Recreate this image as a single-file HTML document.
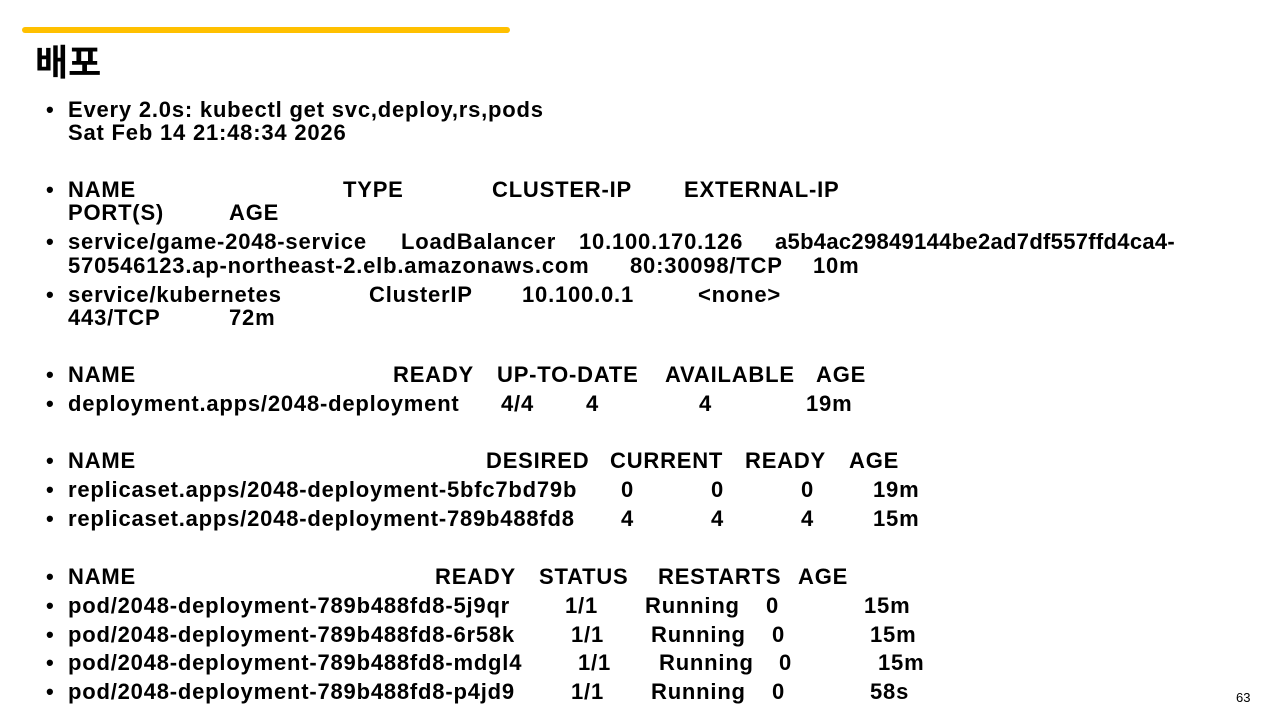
<!DOCTYPE html>
<html><head><meta charset="utf-8"><style>
body{margin:0;width:1280px;height:720px;background:#fff;position:relative;overflow:hidden;font-family:"Liberation Sans","Noto Sans CJK KR",sans-serif;color:#000}
.bar{position:absolute;left:22px;top:27px;width:488px;height:6px;background:#FFC000;border-radius:3px}
h1{position:absolute;left:35px;top:41px;margin:0;font-size:36px;font-weight:bold;line-height:44px}
.t{position:absolute;font-size:22px;font-weight:bold;line-height:24px;white-space:nowrap;letter-spacing:0.8px;margin-top:0px}
.pg{position:absolute;left:1236px;top:690px;font-size:13px}
</style></head><body>
<div class="bar"></div>
<h1>배포</h1>
<div class="t" style="left:46px;top:98px">•</div>
<div class="t" style="left:68px;top:98px">Every 2.0s: kubectl get svc,deploy,rs,pods</div>
<div class="t" style="left:68px;top:121px">Sat Feb 14 21:48:34 2026</div>

<div class="t" style="left:46px;top:178px">•</div>
<div class="t" style="left:68px;top:178px">NAME</div><div class="t" style="left:343px;top:178px">TYPE</div><div class="t" style="left:492px;top:178px">CLUSTER-IP</div><div class="t" style="left:684px;top:178px">EXTERNAL-IP</div>
<div class="t" style="left:68px;top:201px">PORT(S)</div><div class="t" style="left:229px;top:201px">AGE</div>

<div class="t" style="left:46px;top:230px">•</div>
<div class="t" style="left:68px;top:230px">service/game-2048-service</div><div class="t" style="left:401px;top:230px">LoadBalancer</div><div class="t" style="left:579px;top:230px">10.100.170.126</div><div class="t" style="left:775px;top:230px;letter-spacing:0.3px">a5b4ac29849144be2ad7df557ffd4ca4-</div>
<div class="t" style="left:68px;top:254px">570546123.ap-northeast-2.elb.amazonaws.com</div><div class="t" style="left:630px;top:254px">80:30098/TCP</div><div class="t" style="left:813px;top:254px">10m</div>

<div class="t" style="left:46px;top:283px">•</div>
<div class="t" style="left:68px;top:283px">service/kubernetes</div><div class="t" style="left:369px;top:283px">ClusterIP</div><div class="t" style="left:522px;top:283px">10.100.0.1</div><div class="t" style="left:698px;top:283px">&lt;none&gt;</div>
<div class="t" style="left:68px;top:306px">443/TCP</div><div class="t" style="left:229px;top:306px">72m</div>

<div class="t" style="left:46px;top:363px">•</div>
<div class="t" style="left:68px;top:363px">NAME</div><div class="t" style="left:393px;top:363px">READY</div><div class="t" style="left:497px;top:363px">UP-TO-DATE</div><div class="t" style="left:665px;top:363px">AVAILABLE</div><div class="t" style="left:816px;top:363px">AGE</div>
<div class="t" style="left:46px;top:392px">•</div>
<div class="t" style="left:68px;top:392px">deployment.apps/2048-deployment</div><div class="t" style="left:501px;top:392px">4/4</div><div class="t" style="left:586px;top:392px">4</div><div class="t" style="left:699px;top:392px">4</div><div class="t" style="left:806px;top:392px">19m</div>

<div class="t" style="left:46px;top:449px">•</div>
<div class="t" style="left:68px;top:449px">NAME</div><div class="t" style="left:486px;top:449px">DESIRED</div><div class="t" style="left:610px;top:449px">CURRENT</div><div class="t" style="left:745px;top:449px">READY</div><div class="t" style="left:849px;top:449px">AGE</div>
<div class="t" style="left:46px;top:478px">•</div>
<div class="t" style="left:68px;top:478px">replicaset.apps/2048-deployment-5bfc7bd79b</div><div class="t" style="left:621px;top:478px">0</div><div class="t" style="left:711px;top:478px">0</div><div class="t" style="left:801px;top:478px">0</div><div class="t" style="left:873px;top:478px">19m</div>
<div class="t" style="left:46px;top:507px">•</div>
<div class="t" style="left:68px;top:507px">replicaset.apps/2048-deployment-789b488fd8</div><div class="t" style="left:621px;top:507px">4</div><div class="t" style="left:711px;top:507px">4</div><div class="t" style="left:801px;top:507px">4</div><div class="t" style="left:873px;top:507px">15m</div>

<div class="t" style="left:46px;top:565px">•</div>
<div class="t" style="left:68px;top:565px">NAME</div><div class="t" style="left:435px;top:565px">READY</div><div class="t" style="left:539px;top:565px">STATUS</div><div class="t" style="left:658px;top:565px">RESTARTS</div><div class="t" style="left:798px;top:565px">AGE</div>
<div class="t" style="left:46px;top:594px">•</div>
<div class="t" style="left:68px;top:594px">pod/2048-deployment-789b488fd8-5j9qr</div><div class="t" style="left:565px;top:594px">1/1</div><div class="t" style="left:645px;top:594px">Running</div><div class="t" style="left:766px;top:594px">0</div><div class="t" style="left:864px;top:594px">15m</div>
<div class="t" style="left:46px;top:623px">•</div>
<div class="t" style="left:68px;top:623px">pod/2048-deployment-789b488fd8-6r58k</div><div class="t" style="left:571px;top:623px">1/1</div><div class="t" style="left:651px;top:623px">Running</div><div class="t" style="left:772px;top:623px">0</div><div class="t" style="left:870px;top:623px">15m</div>
<div class="t" style="left:46px;top:651px">•</div>
<div class="t" style="left:68px;top:651px">pod/2048-deployment-789b488fd8-mdgl4</div><div class="t" style="left:578px;top:651px">1/1</div><div class="t" style="left:659px;top:651px">Running</div><div class="t" style="left:779px;top:651px">0</div><div class="t" style="left:878px;top:651px">15m</div>
<div class="t" style="left:46px;top:680px">•</div>
<div class="t" style="left:68px;top:680px">pod/2048-deployment-789b488fd8-p4jd9</div><div class="t" style="left:571px;top:680px">1/1</div><div class="t" style="left:651px;top:680px">Running</div><div class="t" style="left:772px;top:680px">0</div><div class="t" style="left:870px;top:680px">58s</div>
<div class="pg">63</div>
</body></html>
